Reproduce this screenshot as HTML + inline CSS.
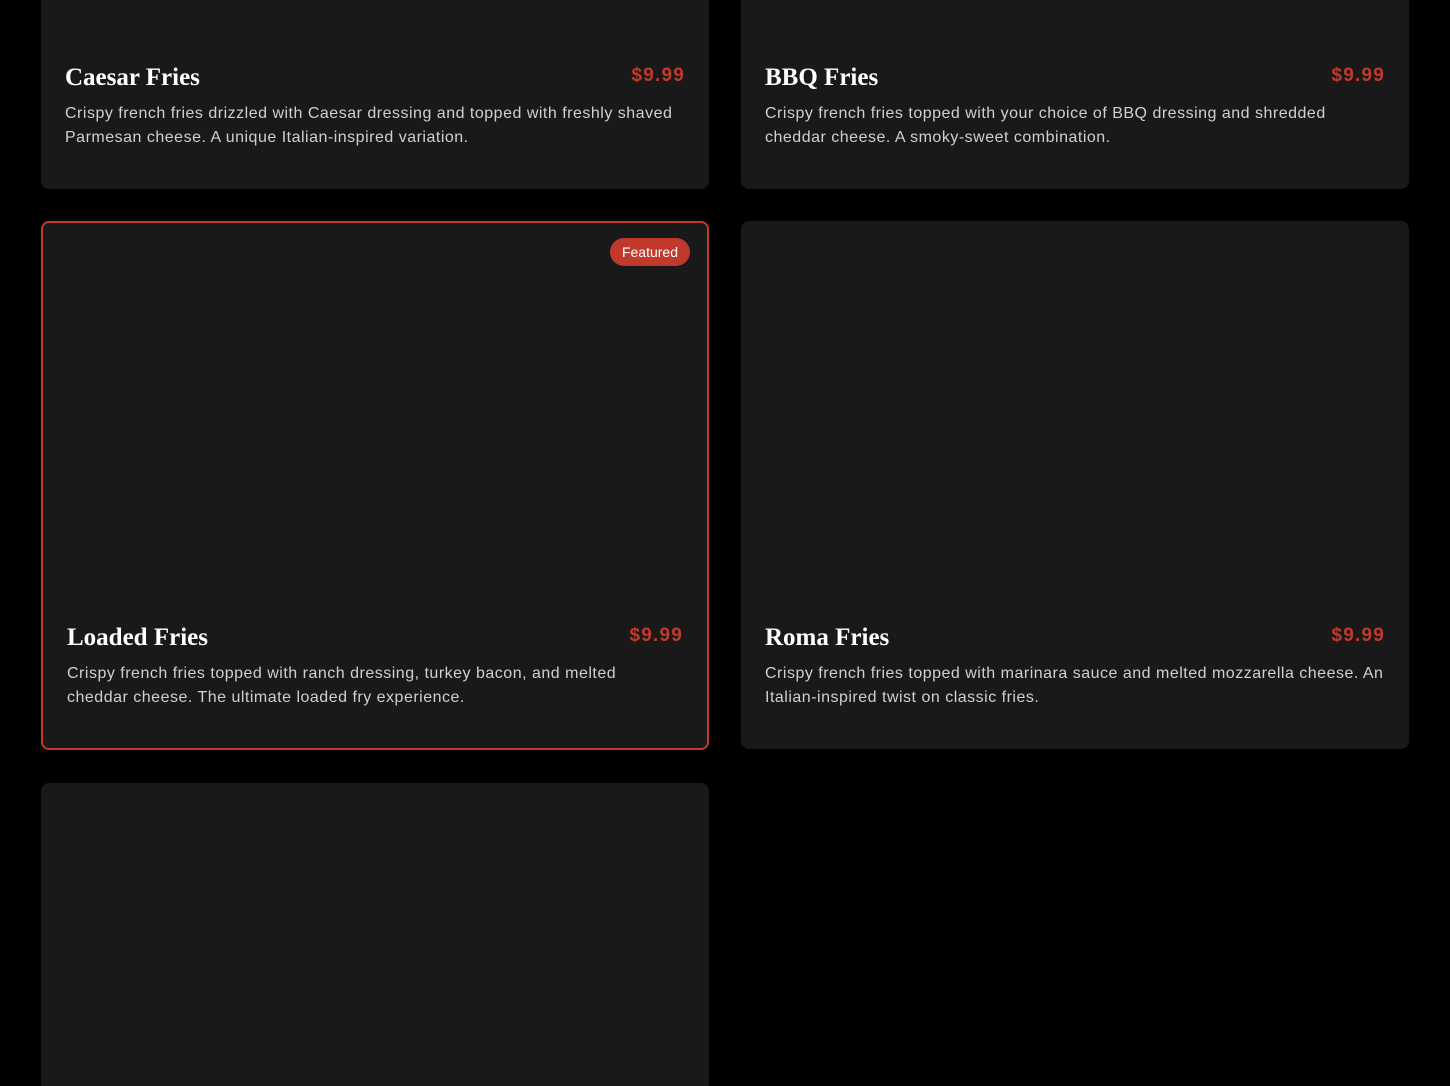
<!DOCTYPE html>
<html><head><style>
html,body{margin:0;padding:0;background:#000;width:1450px;height:1086px;overflow:hidden;font-family:"Liberation Sans",sans-serif}
.card{position:absolute;width:668px;height:528px;background:#191919;border-radius:8px;box-sizing:border-box}
.f{border:2px solid #c0392b}
.t{position:absolute;left:24px;top:402px;font-family:"Liberation Serif",serif;font-weight:bold;font-size:25px;line-height:30px;color:#fff}
.p{position:absolute;right:24px;top:404px;font-weight:bold;font-size:19px;line-height:22px;color:#c0392b;letter-spacing:1.2px}
.d{position:absolute;left:24px;right:22px;top:441px;font-size:16px;line-height:24px;color:#d0d0d0;letter-spacing:0.5px}
.f .t{top:400px}.f .p{top:402px}.f .d{top:439px}
.b{position:absolute;right:17px;top:15px;background:#c0392b;color:#fff;font-size:14px;line-height:28px;padding:0 12px;border-radius:14px}
</style></head><body>
<div class="card" style="left:41px;top:-339px"><div class="t">Caesar Fries</div><div class="p">$9.99</div><div class="d">Crispy french fries drizzled with Caesar dressing and topped with freshly shaved Parmesan cheese. A unique Italian-inspired variation.</div></div>
<div class="card" style="left:741px;top:-339px"><div class="t">BBQ Fries</div><div class="p">$9.99</div><div class="d">Crispy french fries topped with your choice of BBQ dressing and shredded cheddar cheese. A smoky-sweet combination.</div></div>
<div class="card f" style="left:41px;top:221px;height:529px"><div class="b">Featured</div><div class="t">Loaded Fries</div><div class="p">$9.99</div><div class="d">Crispy french fries topped with ranch dressing, turkey bacon, and melted<br>cheddar cheese. The ultimate loaded fry experience.</div></div>
<div class="card" style="left:741px;top:221px"><div class="t">Roma Fries</div><div class="p">$9.99</div><div class="d">Crispy french fries topped with marinara sauce and melted mozzarella cheese. An<br>Italian-inspired twist on classic fries.</div></div>
<div class="card" style="left:41px;top:783px;height:303px;border-radius:8px 8px 0 0"></div>
</body></html>
